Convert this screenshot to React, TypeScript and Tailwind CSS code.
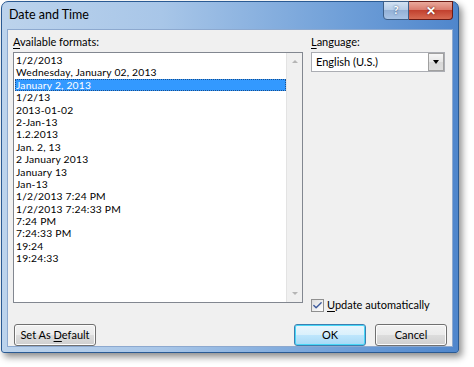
import { Check } from "lucide-react";

const formats = [
  "1/2/2013",
  "Wednesday, January 02, 2013",
  "January 2, 2013",
  "1/2/13",
  "2013-01-02",
  "2-Jan-13",
  "1.2.2013",
  "Jan. 2, 13",
  "2 January 2013",
  "January 13",
  "Jan-13",
  "1/2/2013 7:24 PM",
  "1/2/2013 7:24:33 PM",
  "7:24 PM",
  "7:24:33 PM",
  "19:24",
  "19:24:33",
];

const selectedIndex = 2;

function AeroButton({
  children,
  focused,
  className = "",
}: {
  children: React.ReactNode;
  focused?: boolean;
  className?: string;
}) {
  return (
    <button
      className={
        "h-[22px] rounded-[3px] border text-[11px] text-black " +
        (focused
          ? "border-[#3c7fb1] bg-[linear-gradient(#eaf6fd_0%,#d9f0fc_50%,#bee6fd_50%,#a7d9f5_100%)] shadow-[inset_0_0_0_1px_#48d6f6]"
          : "border-[#707070] bg-[linear-gradient(#f2f2f2_0%,#ebebeb_50%,#dddddd_50%,#cfcfcf_100%)] shadow-[inset_0_0_0_1px_#fcfcfc]") +
        " " +
        className
      }
    >
      {children}
    </button>
  );
}

export default function App() {
  return (
    <div
      className="w-[474px] h-[367px] bg-white pt-[1px] pl-[1px] overflow-hidden"
      style={{ fontFamily: 'Lato, "Noto Sans", sans-serif' }}
    >
      {/* Window frame */}
      <div className="w-[458px] h-[352px] rounded-t-[7px] rounded-b-[3px] border border-[#2a5a93] bg-[linear-gradient(90deg,#bcd3ec_0%,#a8c6e8_35%,#6f9fd8_75%,#4f86cc_100%)] shadow-[3px_4px_7px_rgba(0,0,0,0.45)] flex flex-col">
        {/* Title bar */}
        <div className="h-[27px] flex items-start justify-between pl-[7px] pr-[5px]">
          <span className="mt-[5px] text-[12.5px] text-black leading-[16px]">
            Date and Time
          </span>
          <div className="flex -mt-[1px]">
            <div className="w-[26px] h-[19px] rounded-bl-[4px] border border-[#3d5f88] bg-[linear-gradient(#d2e2f3_0%,#b4cbe6_50%,#94b1d6_50%,#a9c4e6_100%)] flex items-center justify-center text-white text-[11px] font-bold [text-shadow:0_0_2px_#1b3a66]">
              ?
            </div>
            <div className="w-[44px] h-[19px] rounded-br-[4px] border border-l-0 border-[#6b1a14] bg-[linear-gradient(#e9a99c_0%,#d8786a_50%,#c2412f_50%,#d66a52_100%)] flex items-center justify-center text-white text-[12px] font-bold [text-shadow:0_0_2px_#4a0d08]">
              ✕
            </div>
          </div>
        </div>

        {/* Client area */}
        <div className="ml-[5px] mr-[5px] h-[318px] border border-[#8da9cf] bg-[#f0f0f0] flex flex-col">
          <div className="flex pt-[5px] pl-[5px] h-[287px]">
            {/* Left column */}
            <div className="w-[290px] flex flex-col">
              <div className="h-[17px] text-[11px] leading-[14px] text-black">
                <u className="underline-offset-2">A</u>vailable formats:
              </div>
              <div className="h-[251px] border border-[#828790] bg-white flex">
                <div className="flex-1 pt-[1px]">
                  {formats.map((f, i) => (
                    <div
                      key={f}
                      className={
                        "h-[12.4px] leading-[12.4px] pl-[1px] ml-[1px] text-[10.3px] tracking-[0.2px] whitespace-nowrap " +
                        (i === selectedIndex
                          ? "bg-[#3399ff] text-white outline outline-1 outline-dotted outline-[#1c4f8a] -outline-offset-1"
                          : "text-black")
                      }
                    >
                      {f}
                    </div>
                  ))}
                </div>
                {/* Scrollbar */}
                <div className="w-[16px] border-l border-[#e3e3e3] bg-[#f0f0f0] flex flex-col justify-between items-center py-[7px]">
                  <div className="w-0 h-0 border-l-[3px] border-r-[3px] border-b-[3px] border-l-transparent border-r-transparent border-b-[#b5b5b5]" />
                  <div className="w-0 h-0 border-l-[3px] border-r-[3px] border-t-[3px] border-l-transparent border-r-transparent border-t-[#b5b5b5]" />
                </div>
              </div>
            </div>

            {/* Right column */}
            <div className="ml-[8px] w-[134px] flex flex-col">
              <div className="h-[17px] text-[11px] leading-[14px] text-black">
                <u className="underline-offset-2">L</u>anguage:
              </div>
              <div className="h-[20px] border border-[#abadb3] bg-white flex items-center">
                <span className="flex-1 pl-[4px] text-[11px] text-black">English (U.S.)</span>
                <div className="w-[16px] h-[18px] border border-[#a0a0a0] bg-[linear-gradient(#f6f6f6_0%,#e6e6e6_50%,#d8d8d8_50%,#dedede_100%)] flex items-center justify-center">
                  <div className="w-0 h-0 border-l-[3px] border-r-[3px] border-t-[4px] border-l-transparent border-r-transparent border-t-black" />
                </div>
              </div>
              <div className="mt-auto mb-[-1px] flex items-center gap-[3px]">
                <div className="w-[13px] h-[13px] border border-[#8f8f8f] bg-[linear-gradient(135deg,#dcdcdc,#ffffff)] flex items-center justify-center">
                  <Check className="w-[11px] h-[11px] text-[#3d5a9c]" strokeWidth={3} />
                </div>
                <span className="text-[11px] leading-[14px] text-black">
                  <u className="underline-offset-2">U</u>pdate automatically
                </span>
              </div>
            </div>
          </div>

          {/* Buttons */}
          <div className="flex items-center pl-[6px] pr-[5px] mt-[13px]">
            <AeroButton className="w-[82px]">
              Set As <u className="underline-offset-2">D</u>efault
            </AeroButton>
            <div className="flex-1" />
            <AeroButton focused className="w-[72px]">
              OK
            </AeroButton>
            <AeroButton className="w-[72px] ml-[9px]">Cancel</AeroButton>
          </div>
        </div>
      </div>
    </div>
  );
}
